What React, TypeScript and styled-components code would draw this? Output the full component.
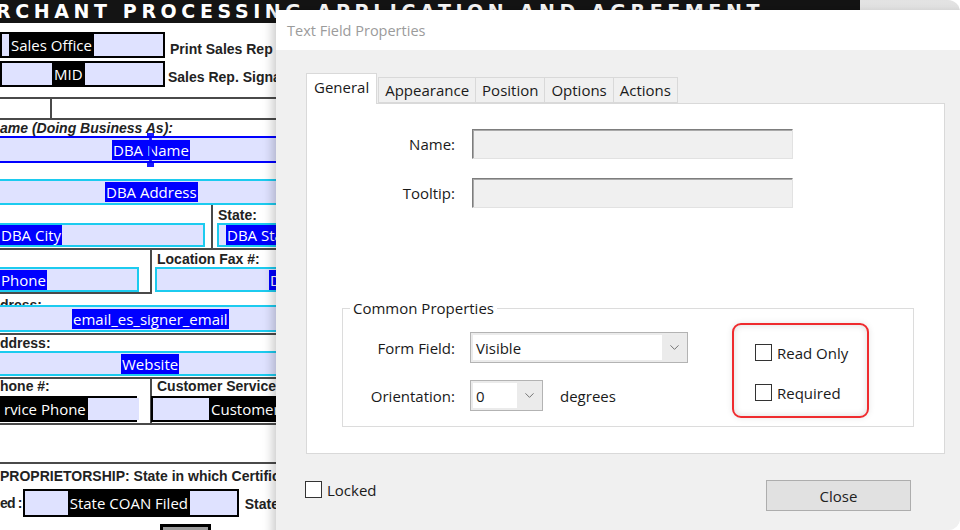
import React from 'react';
import styled, { createGlobalStyle } from 'styled-components';
import { ChevronDown } from 'lucide-react';

const LAVENDER = '#dfe2ff';
const CYAN = '#1ccbef';
const BLUE = '#0000ff';
const RULE = '#4a4a4a';

const GlobalStyle = createGlobalStyle`
  html, body { margin: 0; padding: 0; background: #fff; }
  body { overflow: hidden; }
`;

const Frame = styled.div`
  position: relative;
  width: 960px;
  height: 530px;
  overflow: hidden;
  border-radius: 0 12px 12px 0;
  background: linear-gradient(180deg, #e3e3e3 0, #f2f2f2 10px, #f2f2f2 100%);
`;

/* ---------- pdf page behind the dialog ---------- */

const Page = styled.div`
  width: 860px;
  height: 530px;
  background: #fff;
  display: flex;
  flex-direction: column;
  font-family: "Liberation Sans", Arial, sans-serif;
  color: #222;
`;

const TitleBand = styled.div`
  height: 23px;
  flex-shrink: 0;
  background: #141414;
  color: #fff;
  font-family: "DejaVu Sans", sans-serif;
  font-weight: 700;
  font-size: 19px;
  letter-spacing: 4.6px;
  line-height: 22px;
  white-space: nowrap;
  overflow: hidden;
  text-indent: -4px;
`;

const Strip = styled.div<{ $h: number; $mt?: number; $clip?: boolean }>`
  display: flex;
  align-items: flex-end;
  flex-shrink: 0;
  height: ${p => p.$h}px;
  margin-top: ${p => p.$mt ?? 0}px;
  overflow: ${p => (p.$clip ? 'hidden' : 'visible')};
`;

const Block = styled.div<{ $h: number; $top?: boolean; $bottom?: boolean; $mt?: number }>`
  display: flex;
  flex-shrink: 0;
  box-sizing: border-box;
  height: ${p => p.$h}px;
  margin-top: ${p => p.$mt ?? 0}px;
  border-top: ${p => (p.$top ? `2px solid ${RULE}` : 'none')};
  border-bottom: ${p => (p.$bottom ? `2px solid ${RULE}` : 'none')};
`;

const Col = styled.div<{ $w?: number; $divider?: boolean; $under?: boolean; $pb?: number }>`
  display: flex;
  flex-direction: column;
  justify-content: flex-end;
  box-sizing: border-box;
  ${p => (p.$w ? `width: ${p.$w}px; flex-shrink: 0;` : 'flex: 1;')}
  border-right: ${p => (p.$divider ? `2px solid ${RULE}` : 'none')};
  border-bottom: ${p => (p.$under ? `2px solid ${RULE}` : 'none')};
  padding-bottom: ${p => p.$pb ?? 0}px;
`;

const Rule = styled.div<{ $mt?: number }>`
  height: 2px;
  flex-shrink: 0;
  margin-top: ${p => p.$mt ?? 0}px;
  background: ${RULE};
`;

const Label = styled.span<{ $ml?: number; $pb?: number; $italic?: boolean; $pt?: number; $tight?: boolean }>`
  font-weight: 700;
  font-size: 14px;
  line-height: 14px;
  white-space: nowrap;
  font-style: ${p => (p.$italic ? 'italic' : 'normal')};
  letter-spacing: ${p => (p.$tight ? '-0.8px' : 'normal')};
  margin-left: ${p => p.$ml ?? 0}px;
  padding-bottom: ${p => p.$pb ?? 0}px;
  padding-top: ${p => p.$pt ?? 0}px;
  align-self: ${p => (p.$pt ? 'flex-start' : 'auto')};
`;

const BlackField = styled.div<{ $w: number; $h?: number; $ml?: number }>`
  display: flex;
  box-sizing: border-box;
  flex-shrink: 0;
  width: ${p => p.$w}px;
  height: ${p => (p.$h ? `${p.$h}px` : '100%')};
  margin-left: ${p => p.$ml ?? 0}px;
  border: 2px solid #000;
  background: #000;
`;

const Fill = styled.span<{ $w?: number }>`
  background: ${LAVENDER};
  ${p => (p.$w !== undefined ? `width: ${p.$w}px; flex-shrink: 0;` : 'flex: 1;')}
`;

const InvText = styled.span`
  display: flex;
  align-items: center;
  padding: 0 2px;
  color: #fff;
  font-family: "Open Sans", sans-serif;
  font-size: 15px;
  white-space: nowrap;
`;

const Field = styled.div<{ $c: string; $w?: number; $h?: number; $pl: number; $ml?: number; $closed?: boolean }>`
  position: relative;
  display: flex;
  align-items: center;
  box-sizing: border-box;
  flex-shrink: 0;
  width: ${p => (p.$w ? `${p.$w}px` : '100%')};
  height: ${p => (p.$h ? `${p.$h}px` : '100%')};
  margin-left: ${p => p.$ml ?? 0}px;
  padding-left: ${p => p.$pl}px;
  border: 2px solid ${p => p.$c};
  border-left: ${p => (p.$closed ? `2px solid ${p.$c}` : 'none')};
  background: ${LAVENDER};
`;

const Hl = styled.span`
  background: ${BLUE};
  color: #fff;
  font-family: "Open Sans", sans-serif;
  font-size: 15px;
  line-height: 20px;
  padding: 0 1px;
  white-space: nowrap;
`;

const Caret = styled.span`
  position: absolute;
  left: 147px;
  top: -5px;
  width: 7px;
  height: 34px;
  background: ${BLUE};
  opacity: 0.9;
  clip-path: polygon(0 0, 100% 0, 100% 12%, 70% 12%, 70% 88%, 100% 88%, 100% 100%, 0 100%, 0 88%, 30% 88%, 30% 12%, 0 12%);
`;

const Stub = styled.div`
  margin-left: 160px;
  margin-top: 7px;
  width: 51px;
  height: 14px;
  flex-shrink: 0;
  box-sizing: border-box;
  border: 3px solid #000;
  background: #9c9c9c;
`;

/* ---------- dialog ---------- */

const Dialog = styled.div`
  position: absolute;
  left: 276px;
  top: 10px;
  width: 720px;
  height: 540px;
  display: flex;
  flex-direction: column;
  background: #f0f0f0;
  box-shadow: -3px 0 10px rgba(0, 0, 0, 0.22);
  font-family: "Open Sans", "Segoe UI", sans-serif;
  font-size: 15px;
  color: #1a1a1a;
`;

const DialogTitle = styled.div`
  height: 40px;
  flex-shrink: 0;
  display: flex;
  align-items: center;
  padding-left: 11px;
  background: #fff;
  color: #9b9b9b;
  font-size: 14.5px;
`;

const DialogBody = styled.div`
  display: flex;
  flex-direction: column;
  padding: 24px 0 0 30px;
`;

const TabRow = styled.div`
  display: flex;
  align-items: flex-end;
  height: 29px;
`;

const Tab = styled.div<{ $active?: boolean }>`
  display: flex;
  align-items: center;
  box-sizing: border-box;
  height: ${p => (p.$active ? 31 : 26)}px;
  padding: 0 ${p => (p.$active ? 7 : 6)}px;
  padding-bottom: ${p => (p.$active ? 4 : 0)}px;
  margin-right: ${p => (p.$active ? 1 : -1)}px;
  margin-bottom: ${p => (p.$active ? -1 : 0)}px;
  border: 1px solid #d9d9d9;
  border-bottom: ${p => (p.$active ? 'none' : '1px solid #d9d9d9')};
  background: ${p => (p.$active ? '#fff' : '#f0f0f0')};
  position: relative;
  z-index: ${p => (p.$active ? 1 : 0)};
`;

const Panel = styled.div`
  width: 639px;
  height: 351px;
  box-sizing: border-box;
  display: flex;
  flex-direction: column;
  background: #fff;
  border: 1px solid #d9d9d9;
`;

const FieldRow = styled.div<{ $mt: number }>`
  display: flex;
  align-items: center;
  margin-top: ${p => p.$mt}px;
`;

const RowLabel = styled.span<{ $w: number }>`
  width: ${p => p.$w}px;
  flex-shrink: 0;
  text-align: right;
  margin-right: 17px;
`;

const TextInput = styled.div`
  width: 321px;
  height: 30px;
  box-sizing: border-box;
  background: #f0f0f0;
  border: 1px solid;
  border-color: #7d7d7d #e2e2e2 #e2e2e2 #7d7d7d;
  box-shadow: inset 1px 1px 0 #a9a9a9;
`;

const GroupBox = styled.div`
  position: relative;
  display: flex;
  align-items: flex-start;
  width: 572px;
  height: 119px;
  box-sizing: border-box;
  margin: 100px 0 0 35px;
  padding-top: 23px;
  border: 1px solid #dcdcdc;
`;

const Legend = styled.span`
  position: absolute;
  left: 7px;
  top: -12px;
  padding: 0 3px;
  background: #fff;
  line-height: 22px;
`;

const GroupRows = styled.div`
  display: flex;
  flex-direction: column;
  gap: 17px;
`;

const GroupRow = styled.div`
  display: flex;
  align-items: center;
`;

const GLabel = styled.span`
  width: 112px;
  flex-shrink: 0;
  text-align: right;
  margin-right: 15px;
`;

const Select = styled.div<{ $w: number }>`
  display: flex;
  width: ${p => p.$w}px;
  height: 31px;
  box-sizing: border-box;
  padding: 2px 0 2px 2px;
  background: #ebebeb;
  border: 1px solid #b3b3b3;
`;

const SelectValue = styled.span`
  flex: 1;
  display: flex;
  align-items: center;
  padding-left: 3px;
  background: #fff;
`;

const SelectArrow = styled.span`
  width: 25px;
  display: flex;
  align-items: center;
  justify-content: center;
  color: #6b6b6b;
`;

const Unit = styled.span`
  margin-left: 17px;
`;

const Highlight = styled.div`
  width: 137px;
  height: 95px;
  box-sizing: border-box;
  margin: -9px 0 0 44px;
  padding: 19px 0 0 21px;
  display: flex;
  flex-direction: column;
  gap: 23px;
  border: 2px solid #ef2b2e;
  border-radius: 9px;
  box-shadow: inset 0 0 7px rgba(0, 0, 0, 0.14), 0 0 6px rgba(0, 0, 0, 0.1);
`;

const Check = styled.label<{ $mt?: number }>`
  display: flex;
  align-items: center;
  height: 17px;
  gap: 5px;
  white-space: nowrap;
  margin-top: ${p => p.$mt ?? 0}px;
`;

const Box = styled.span`
  width: 17px;
  height: 17px;
  box-sizing: border-box;
  flex-shrink: 0;
  border: 1px solid #333;
  background: #fff;
`;

const Footer = styled.div`
  display: flex;
  align-items: flex-start;
  width: 606px;
  height: 31px;
  margin: 26px 0 0 -1px;
`;

const CloseButton = styled.button`
  margin-left: auto;
  width: 145px;
  height: 31px;
  background: #e1e1e1;
  border: 1px solid #adadad;
  font-family: inherit;
  font-size: 15px;
  color: #222;
`;

function PdfPage() {
  return (
    <Page>
      <TitleBand>RCHANT PROCESSING APPLICATION AND AGREEMENT</TitleBand>
      <Strip $h={26} $mt={9}>
        <BlackField $w={165}><Fill $w={7} /><InvText>Sales Office</InvText><Fill /></BlackField>
        <Label $ml={5} $pb={2}>Print Sales Rep Name:</Label>
      </Strip>
      <Strip $h={26} $mt={3}>
        <BlackField $w={165}><Fill $w={50} /><InvText>MID</InvText><Fill /></BlackField>
        <Label $ml={3} $pb={3}>Sales Rep. Signature:</Label>
      </Strip>
      <Block $h={23} $top $bottom $mt={10}>
        <Col $w={52} $divider />
        <Col />
      </Block>
      <Strip $h={16}>
        <Label $italic $pb={1}>ame (Doing Business As):</Label>
      </Strip>
      <Strip $h={27}>
        <Field $c={BLUE} $pl={112}><Hl>DBA Name</Hl><Caret /></Field>
      </Strip>
      <Strip $h={26} $mt={16}>
        <Field $c={CYAN} $pl={105}><Hl>DBA Address</Hl></Field>
      </Strip>
      <Block $h={45} $bottom>
        <Col $w={213} $divider $pb={1}>
          <Field $c={CYAN} $w={205} $h={24} $pl={0}><Hl>DBA City</Hl></Field>
        </Col>
        <Col $pb={1}>
          <Label $ml={5} $pb={1}>State:</Label>
          <Field $c={CYAN} $h={24} $ml={4} $pl={7} $closed><Hl>DBA State</Hl></Field>
        </Col>
      </Block>
      <Block $h={44}>
        <Col $w={152} $divider $under>
          <Field $c={CYAN} $w={139} $h={25} $pl={0}><Hl>Phone</Hl></Field>
        </Col>
        <Col $pb={2}>
          <Label $ml={5} $pb={1}>Location Fax #:</Label>
          <Field $c={CYAN} $h={25} $ml={3} $pl={112} $closed><Hl>DBA Fax</Hl></Field>
        </Col>
      </Block>
      <Strip $h={11} $clip>
        <Label $pt={4}>dress:</Label>
      </Strip>
      <Strip $h={27}>
        <Field $c={CYAN} $pl={72}><Hl>email_es_signer_email</Hl></Field>
      </Strip>
      <Rule $mt={1} />
      <Strip $h={16}>
        <Label $pb={1}>ddress:</Label>
      </Strip>
      <Strip $h={25}>
        <Field $c={CYAN} $pl={121}><Hl>Website</Hl></Field>
      </Strip>
      <Block $h={48} $top $bottom $mt={1}>
        <Col $w={152} $divider $pb={1}>
          <Label $pb={3}>hone #:</Label>
          <BlackField $w={137} $h={26}><InvText>rvice Phone</InvText><Fill $w={51} /></BlackField>
        </Col>
        <Col $pb={1}>
          <Label $ml={5} $pb={3}>Customer Service</Label>
          <BlackField $w={300} $h={26} $ml={-1}><Fill $w={56} /><InvText>Customer Service</InvText><Fill /></BlackField>
        </Col>
      </Block>
      <Rule $mt={37} />
      <Strip $h={20}>
        <Label $pb={1}>PROPRIETORSHIP: State in which Certificate</Label>
      </Strip>
      <Strip $h={28} $mt={5}>
        <Label $pb={7} $tight>ed :</Label>
        <BlackField $w={216} $ml={1}><Fill $w={43} /><InvText>State COAN Filed</InvText><Fill /></BlackField>
        <Label $ml={6} $pb={6}>State</Label>
      </Strip>
      <Stub />
    </Page>
  );
}

function TextFieldProperties() {
  return (
    <Dialog>
      <DialogTitle>Text Field Properties</DialogTitle>
      <DialogBody>
        <TabRow>
          <Tab $active>General</Tab>
          <Tab>Appearance</Tab>
          <Tab>Position</Tab>
          <Tab>Options</Tab>
          <Tab>Actions</Tab>
        </TabRow>
        <Panel>
          <FieldRow $mt={25}>
            <RowLabel $w={148}>Name:</RowLabel>
            <TextInput />
          </FieldRow>
          <FieldRow $mt={19}>
            <RowLabel $w={148}>Tooltip:</RowLabel>
            <TextInput />
          </FieldRow>
          <GroupBox>
            <Legend>Common Properties</Legend>
            <GroupRows>
              <GroupRow>
                <GLabel>Form Field:</GLabel>
                <Select $w={218}>
                  <SelectValue>Visible</SelectValue>
                  <SelectArrow><ChevronDown size={15} strokeWidth={1.5} /></SelectArrow>
                </Select>
              </GroupRow>
              <GroupRow>
                <GLabel>Orientation:</GLabel>
                <Select $w={73}>
                  <SelectValue>0</SelectValue>
                  <SelectArrow><ChevronDown size={15} strokeWidth={1.5} /></SelectArrow>
                </Select>
                <Unit>degrees</Unit>
              </GroupRow>
            </GroupRows>
            <Highlight>
              <Check><Box />Read Only</Check>
              <Check><Box />Required</Check>
            </Highlight>
          </GroupBox>
        </Panel>
        <Footer>
          <Check $mt={1}><Box />Locked</Check>
          <CloseButton>Close</CloseButton>
        </Footer>
      </DialogBody>
    </Dialog>
  );
}

export default function App() {
  return (
    <>
      <GlobalStyle />
      <Frame>
        <PdfPage />
        <TextFieldProperties />
      </Frame>
    </>
  );
}
